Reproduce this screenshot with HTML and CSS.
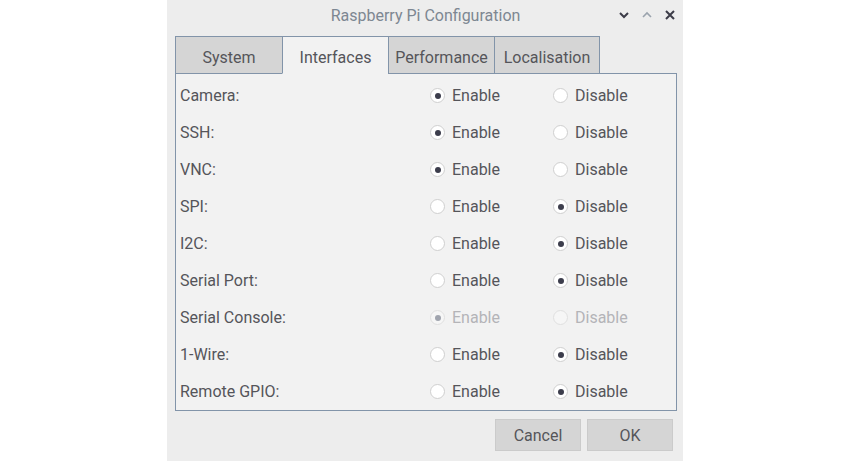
FILE: index.html
```html
<!DOCTYPE html>
<html>
<head>
<meta charset="utf-8">
<link rel="stylesheet" href="styles.css">
</head>
<body>
<div class="window">
  <div class="titlebar">
    <div class="title">Raspberry Pi Configuration</div>
    <div class="controls">
      <svg class="ctl" width="12" height="12" viewBox="0 0 12 12"><path d="M2 4 L6 8 L10 4" fill="none" stroke="#3c3c48" stroke-width="2"/></svg>
      <svg class="ctl" width="12" height="12" viewBox="0 0 12 12"><path d="M2 8 L6 4 L10 8" fill="none" stroke="#9aa3ad" stroke-width="1.6"/></svg>
      <svg class="ctl" width="12" height="12" viewBox="0 0 12 12"><path d="M2 2 L10 10 M10 2 L2 10" fill="none" stroke="#3c3c48" stroke-width="2"/></svg>
    </div>
  </div>
  <div class="tabs">
    <div class="tab">System</div>
    <div class="tab active">Interfaces</div>
    <div class="tab">Performance</div>
    <div class="tab">Localisation</div>
  </div>
  <div class="frame">
    <div class="row"><span class="label">Camera:</span><span class="opt"><i class="radio on"></i>Enable</span><span class="opt"><i class="radio"></i>Disable</span></div>
    <div class="row"><span class="label">SSH:</span><span class="opt"><i class="radio on"></i>Enable</span><span class="opt"><i class="radio"></i>Disable</span></div>
    <div class="row"><span class="label">VNC:</span><span class="opt"><i class="radio on"></i>Enable</span><span class="opt"><i class="radio"></i>Disable</span></div>
    <div class="row"><span class="label">SPI:</span><span class="opt"><i class="radio"></i>Enable</span><span class="opt"><i class="radio on"></i>Disable</span></div>
    <div class="row"><span class="label">I2C:</span><span class="opt"><i class="radio"></i>Enable</span><span class="opt"><i class="radio on"></i>Disable</span></div>
    <div class="row"><span class="label">Serial Port:</span><span class="opt"><i class="radio"></i>Enable</span><span class="opt"><i class="radio on"></i>Disable</span></div>
    <div class="row"><span class="label">Serial Console:</span><span class="opt disabled"><i class="radio on"></i>Enable</span><span class="opt disabled"><i class="radio"></i>Disable</span></div>
    <div class="row"><span class="label">1-Wire:</span><span class="opt"><i class="radio"></i>Enable</span><span class="opt"><i class="radio on"></i>Disable</span></div>
    <div class="row"><span class="label">Remote GPIO:</span><span class="opt"><i class="radio"></i>Enable</span><span class="opt"><i class="radio on"></i>Disable</span></div>
  </div>
  <div class="buttons">
    <div class="btn">Cancel</div>
    <div class="btn">OK</div>
  </div>
</div>
</body>
</html>
```

FILE: styles.css
```css
html, body {
  margin: 0;
  padding: 0;
  background: #ffffff;
}
body {
  font-family: Roboto, "Liberation Sans", sans-serif;
  font-size: 16px;
  color: #55555a;
}
.window {
  width: 516px;
  height: 461px;
  margin: 0 auto;
  background: #ededed;
  box-sizing: border-box;
  padding: 0 7px 0 8px;
  display: flex;
  flex-direction: column;
}
.titlebar {
  height: 36px;
  position: relative;
  display: flex;
  align-items: center;
  justify-content: center;
}
.title {
  color: #7d8792;
  font-size: 16px;
  margin-top: -6px;
}
.controls {
  position: absolute;
  right: 0;
  top: 9px;
  display: flex;
  gap: 11px;
}
.ctl {
  display: block;
}
.tabs {
  display: flex;
  height: 38px;
  margin-bottom: -1px;
  position: relative;
  z-index: 1;
}
.tab {
  box-sizing: border-box;
  height: 38px;
  border: 1px solid #8294a9;
  border-right: none;
  background: #d5d5d5;
  display: flex;
  align-items: center;
  justify-content: center;
  padding-top: 4px;
}
.tab:nth-child(1) { width: 107px; }
.tab:nth-child(2) { width: 106px; }
.tab:nth-child(3) { width: 106px; }
.tab:nth-child(4) { width: 106px; border-right: 1px solid #8294a9; }
.tab.active {
  background: #f2f2f2;
  border-bottom-color: #f2f2f2;
}
.frame {
  box-sizing: border-box;
  width: 502px;
  height: 338px;
  border: 1px solid #8294a9;
  background: #f2f2f2;
  padding: 3px 0 0 4px;
}
.row {
  height: 37px;
  display: grid;
  grid-template-columns: 250px 123px 1fr;
  align-items: center;
}
.opt {
  display: flex;
  align-items: center;
}
.radio {
  box-sizing: border-box;
  width: 15px;
  height: 15px;
  border-radius: 50%;
  border: 1px solid #cfcfcf;
  background: #ffffff;
  margin-right: 7px;
  display: flex;
  align-items: center;
  justify-content: center;
}
.radio.on::after {
  content: "";
  width: 6px;
  height: 6px;
  border-radius: 50%;
  background: #3c3d4c;
}
.opt.disabled {
  color: #b4b4b8;
}
.opt.disabled .radio {
  border-color: #e0e0e0;
  background: #f6f6f6;
}
.opt.disabled .radio.on::after {
  background: #a0a4ae;
}
.buttons {
  display: flex;
  justify-content: flex-end;
  gap: 6px;
  padding: 8px 3px 0 0;
}
.btn {
  box-sizing: border-box;
  width: 86px;
  height: 32px;
  background: #d5d5d5;
  border: 1px solid #cbcbcb;
  display: flex;
  align-items: center;
  justify-content: center;
  color: #55555a;
}
```
